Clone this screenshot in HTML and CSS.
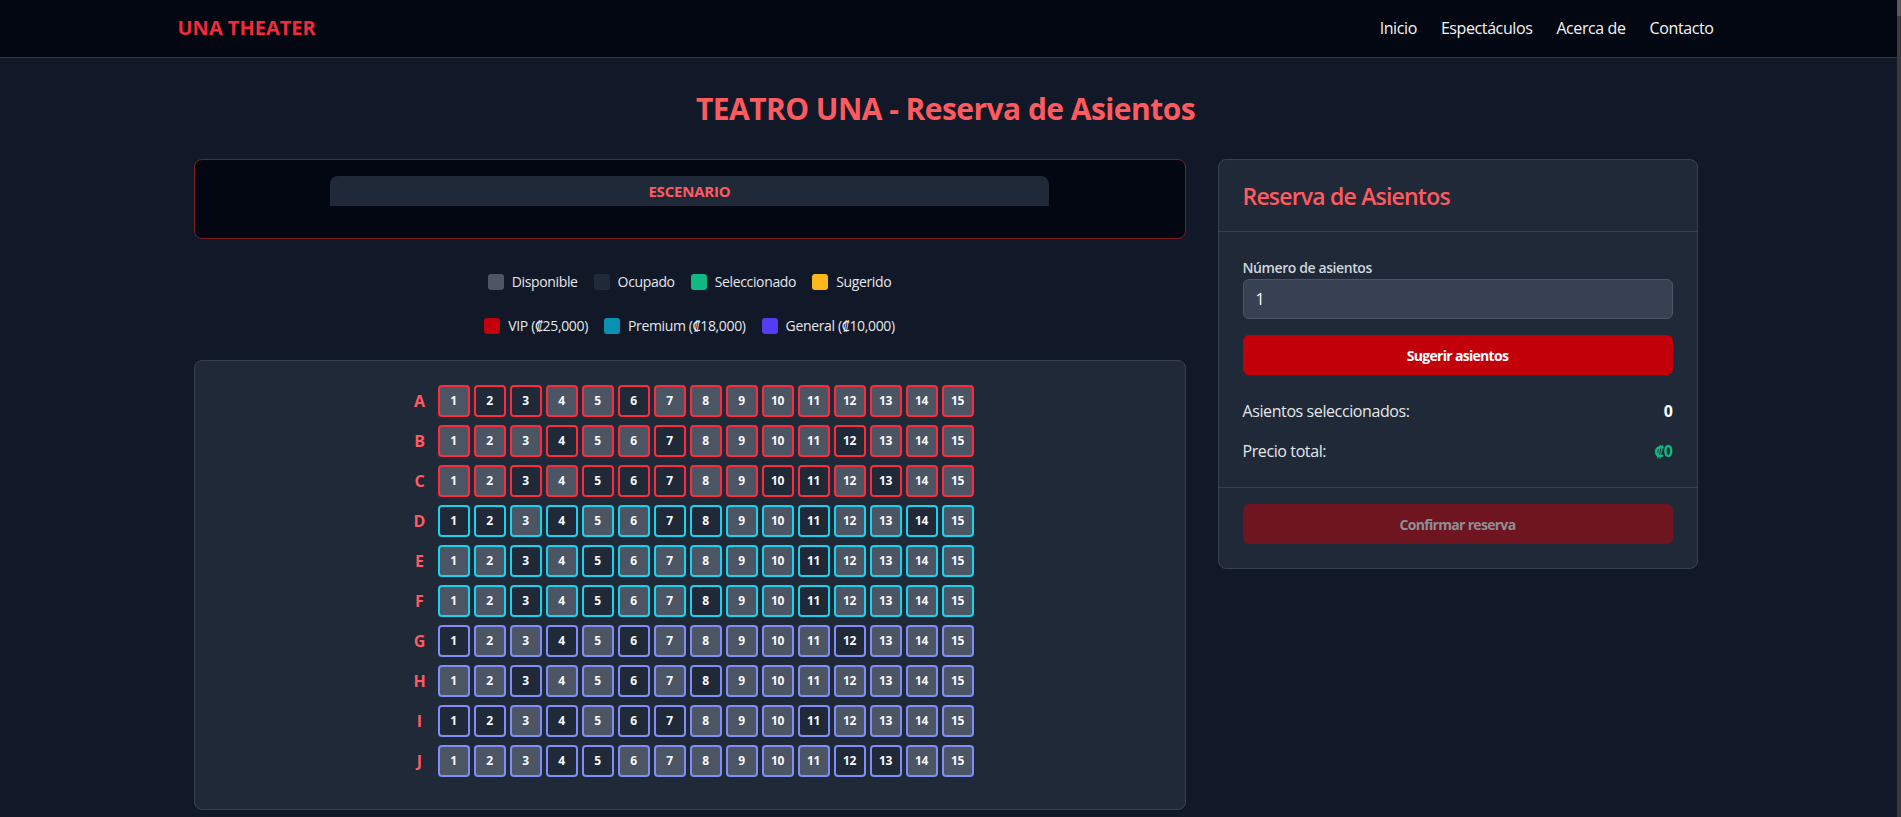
FILE: index.html
```html
<!DOCTYPE html>
<html lang="es">
<head>
<meta charset="utf-8">
<title>UNA THEATER - Reserva de Asientos</title>
<link rel="stylesheet" href="styles.css">
</head>
<body>
<header class="topbar">
  <div class="topbar-inner">
    <a class="logo" href="#">UNA THEATER</a>
    <nav class="nav">
      <a href="#">Inicio</a>
      <a href="#">Espectáculos</a>
      <a href="#">Acerca de</a>
      <a href="#">Contacto</a>
    </nav>
  </div>
</header>

<main class="main">
  <h1 class="page-title">TEATRO UNA - Reserva de Asientos</h1>

  <div class="layout">
    <section class="left-col">
      <div class="stage">
        <div class="stage-bar">ESCENARIO</div>
      </div>

      <div class="legend legend-status">
        <div class="legend-item"><span class="swatch sw-available"></span>Disponible</div>
        <div class="legend-item"><span class="swatch sw-occupied"></span>Ocupado</div>
        <div class="legend-item"><span class="swatch sw-selected"></span>Seleccionado</div>
        <div class="legend-item"><span class="swatch sw-suggested"></span>Sugerido</div>
      </div>

      <div class="legend legend-zones">
        <div class="legend-item"><span class="swatch sw-vip"></span>VIP (₡25,000)</div>
        <div class="legend-item"><span class="swatch sw-premium"></span>Premium (₡18,000)</div>
        <div class="legend-item"><span class="swatch sw-general"></span>General (₡10,000)</div>
      </div>

      <div class="seat-map">
        <div class="seat-row vip"><span class="row-label">A</span><span class="seat">1</span><span class="seat o">2</span><span class="seat o">3</span><span class="seat">4</span><span class="seat">5</span><span class="seat o">6</span><span class="seat">7</span><span class="seat">8</span><span class="seat">9</span><span class="seat">10</span><span class="seat">11</span><span class="seat">12</span><span class="seat">13</span><span class="seat">14</span><span class="seat">15</span></div>
        <div class="seat-row vip"><span class="row-label">B</span><span class="seat">1</span><span class="seat">2</span><span class="seat">3</span><span class="seat o">4</span><span class="seat">5</span><span class="seat">6</span><span class="seat o">7</span><span class="seat">8</span><span class="seat">9</span><span class="seat">10</span><span class="seat">11</span><span class="seat o">12</span><span class="seat">13</span><span class="seat">14</span><span class="seat">15</span></div>
        <div class="seat-row vip"><span class="row-label">C</span><span class="seat">1</span><span class="seat">2</span><span class="seat o">3</span><span class="seat">4</span><span class="seat o">5</span><span class="seat o">6</span><span class="seat o">7</span><span class="seat">8</span><span class="seat">9</span><span class="seat o">10</span><span class="seat o">11</span><span class="seat">12</span><span class="seat o">13</span><span class="seat">14</span><span class="seat">15</span></div>
        <div class="seat-row premium"><span class="row-label">D</span><span class="seat o">1</span><span class="seat o">2</span><span class="seat">3</span><span class="seat o">4</span><span class="seat">5</span><span class="seat">6</span><span class="seat o">7</span><span class="seat o">8</span><span class="seat">9</span><span class="seat">10</span><span class="seat o">11</span><span class="seat">12</span><span class="seat">13</span><span class="seat o">14</span><span class="seat">15</span></div>
        <div class="seat-row premium"><span class="row-label">E</span><span class="seat">1</span><span class="seat">2</span><span class="seat o">3</span><span class="seat">4</span><span class="seat o">5</span><span class="seat">6</span><span class="seat">7</span><span class="seat">8</span><span class="seat">9</span><span class="seat">10</span><span class="seat o">11</span><span class="seat">12</span><span class="seat">13</span><span class="seat">14</span><span class="seat">15</span></div>
        <div class="seat-row premium"><span class="row-label">F</span><span class="seat">1</span><span class="seat">2</span><span class="seat o">3</span><span class="seat">4</span><span class="seat o">5</span><span class="seat">6</span><span class="seat">7</span><span class="seat o">8</span><span class="seat">9</span><span class="seat">10</span><span class="seat o">11</span><span class="seat">12</span><span class="seat">13</span><span class="seat">14</span><span class="seat">15</span></div>
        <div class="seat-row general"><span class="row-label">G</span><span class="seat o">1</span><span class="seat">2</span><span class="seat">3</span><span class="seat o">4</span><span class="seat">5</span><span class="seat o">6</span><span class="seat">7</span><span class="seat">8</span><span class="seat">9</span><span class="seat">10</span><span class="seat">11</span><span class="seat o">12</span><span class="seat">13</span><span class="seat">14</span><span class="seat">15</span></div>
        <div class="seat-row general"><span class="row-label">H</span><span class="seat">1</span><span class="seat">2</span><span class="seat o">3</span><span class="seat">4</span><span class="seat">5</span><span class="seat o">6</span><span class="seat">7</span><span class="seat o">8</span><span class="seat">9</span><span class="seat">10</span><span class="seat">11</span><span class="seat">12</span><span class="seat">13</span><span class="seat">14</span><span class="seat">15</span></div>
        <div class="seat-row general"><span class="row-label">I</span><span class="seat o">1</span><span class="seat o">2</span><span class="seat">3</span><span class="seat o">4</span><span class="seat">5</span><span class="seat o">6</span><span class="seat o">7</span><span class="seat">8</span><span class="seat">9</span><span class="seat">10</span><span class="seat o">11</span><span class="seat">12</span><span class="seat">13</span><span class="seat">14</span><span class="seat">15</span></div>
        <div class="seat-row general"><span class="row-label">J</span><span class="seat">1</span><span class="seat">2</span><span class="seat">3</span><span class="seat o">4</span><span class="seat o">5</span><span class="seat">6</span><span class="seat">7</span><span class="seat">8</span><span class="seat">9</span><span class="seat">10</span><span class="seat">11</span><span class="seat o">12</span><span class="seat o">13</span><span class="seat">14</span><span class="seat">15</span></div>
      </div>
    </section>

    <aside class="card">
      <div class="card-header">
        <h2 class="card-title">Reserva de Asientos</h2>
      </div>
      <div class="card-body">
        <label class="field-label" for="qty">Número de asientos</label>
        <input class="field-input" id="qty" type="text" value="1">
        <button class="btn btn-primary" type="button">Sugerir asientos</button>
        <div class="stats">
          <div class="stat-row"><span>Asientos seleccionados:</span><span class="stat-value">0</span></div>
          <div class="stat-row"><span>Precio total:</span><span class="stat-value price">₡0</span></div>
        </div>
      </div>
      <div class="card-footer">
        <button class="btn btn-disabled" type="button" disabled>Confirmar reserva</button>
      </div>
    </aside>
  </div>
</main>
<div class="scroll-strip"><div class="scroll-thumb"></div></div>
</body>
</html>
```
FILE: styles.css
```css
* {
  box-sizing: border-box;
  margin: 0;
  padding: 0;
}

html {
  overflow: hidden;
}

body {
  background: #111827;
  color: #e5e7eb;
  font-family: "Open Sans", "Noto Sans", "Liberation Sans", sans-serif;
  font-size: 16px;
  line-height: 24px;
}

a {
  text-decoration: none;
  color: inherit;
}

/* ---------- top bar ---------- */
.topbar {
  background: #030712;
  border-bottom: 1px solid #7f1d1d;
}

.topbar-inner {
  width: 1536px;
  margin-left: calc(50% - 773px);
  height: 57px;
  padding-bottom: 2px;
  display: flex;
  align-items: center;
  justify-content: space-between;
}

.logo {
  color: #f42a3b;
  font-size: 20px;
  font-weight: 700;
  line-height: 28px;
}

.nav {
  display: flex;
  gap: 24px;
}

.nav a {
  color: #f3f4f6;
  font-size: 16px;
  letter-spacing: -0.4px;
}

/* ---------- main ---------- */
.main {
  width: 1536px;
  margin-left: calc(50% - 773px);
  padding: 33px 16px 8px;
}

.page-title {
  text-align: center;
  color: #ff5a5f;
  font-size: 30px;
  line-height: 36px;
  font-weight: 700;
  letter-spacing: -0.55px;
  margin-bottom: 32px;
}

.layout {
  display: grid;
  grid-template-columns: repeat(3, 1fr);
  gap: 32px;
  align-items: start;
}

.left-col {
  grid-column: span 2;
}

/* stage */
.stage {
  background: #030712;
  border: 1px solid #7f1d1d;
  border-radius: 8px;
  padding: 16px 16px 32px;
  margin-bottom: 33px;
}

.stage-bar {
  width: 75%;
  height: 30px;
  margin: 0 auto;
  background: #1f2937;
  border-radius: 8px 8px 0 0;
  display: flex;
  align-items: center;
  justify-content: center;
  color: #ff5a5f;
  font-size: 15px;
  font-weight: 700;
  letter-spacing: -0.2px;
}

/* legend */
.legend {
  display: flex;
  justify-content: center;
  gap: 16px;
  font-size: 14px;
  line-height: 20px;
  letter-spacing: -0.35px;
  color: #e5e7eb;
  margin-bottom: 24px;
}

.legend-item {
  display: flex;
  align-items: center;
  gap: 8px;
}

.swatch {
  width: 16px;
  height: 16px;
  border-radius: 3px;
}

.sw-available { background: #4b5563; }
.sw-occupied { background: #1f2937; }
.sw-selected { background: #10b981; }
.sw-suggested { background: #fbb81b; }
.sw-vip { background: #c1000b; }
.sw-premium { background: #0891b2; }
.sw-general { background: #553cf2; }

/* seat map */
.seat-map {
  background: #1f2937;
  border: 1px solid #374151;
  border-radius: 8px;
  padding: 24px;
}

.seat-row {
  display: flex;
  justify-content: center;
  align-items: center;
  gap: 4px;
  margin-bottom: 8px;
}

.row-label {
  width: 28px;
  text-align: center;
  color: #ff5a5f;
  font-size: 16px;
  font-weight: 700;
}

.seat {
  width: 32px;
  height: 32px;
  border: 2px solid;
  border-radius: 4px;
  background: #4b5563;
  color: #f9fafb;
  font-size: 12px;
  font-weight: 700;
  letter-spacing: -0.3px;
  display: flex;
  align-items: center;
  justify-content: center;
}

.seat.o {
  background: #1f2937;
}

.vip .seat { border-color: #ff2a3b; }
.premium .seat { border-color: #16d4f0; }
.general .seat { border-color: #818cf8; }

/* reservation card */
.card {
  background: #1f2937;
  border: 1px solid #374151;
  border-radius: 8px;
}

.card-header {
  padding: 20px 24px 19px;
  border-bottom: 1px solid #374151;
}

.card-title {
  color: #ff5a5f;
  font-size: 23px;
  line-height: 32px;
  font-weight: 600;
  letter-spacing: -0.8px;
}

.card-body {
  padding: 26px 24px 24px;
}

.field-label {
  display: block;
  color: #d1d5db;
  font-size: 14px;
  line-height: 20px;
  font-weight: 600;
  letter-spacing: -0.4px;
  margin-bottom: 1px;
}

.field-input {
  display: block;
  width: 100%;
  height: 40px;
  background: #374151;
  border: 1px solid #4b5563;
  border-radius: 6px;
  padding: 0 12px;
  color: #ffffff;
  font-family: inherit;
  font-size: 16px;
  margin-bottom: 16px;
  outline: none;
}

.btn {
  display: block;
  width: 100%;
  height: 40px;
  border: 0;
  border-radius: 6px;
  font-family: inherit;
  font-size: 14px;
  font-weight: 700;
  letter-spacing: -0.7px;
}

.btn-primary {
  background: #c1000a;
  color: #ffffff;
}

.btn-disabled {
  background: #6f1520;
  color: #8d8f97;
}

.stats {
  margin-top: 24px;
  display: flex;
  flex-direction: column;
  gap: 16px;
}

.stat-row {
  display: flex;
  justify-content: space-between;
  color: #e5e7eb;
  letter-spacing: -0.4px;
}

.stat-value {
  color: #ffffff;
  font-weight: 700;
}

.stat-value.price {
  color: #10b981;
}

.card-footer {
  border-top: 1px solid #374151;
  padding: 16px 24px 24px;
}

/* thin overlay scrollbar at the window edge */
.scroll-strip {
  position: fixed;
  top: 0;
  right: 0;
  bottom: 0;
  width: 4px;
  background: #3a3a3a;
}

.scroll-thumb {
  height: 16px;
  background: #5a5a5a;
}
```
